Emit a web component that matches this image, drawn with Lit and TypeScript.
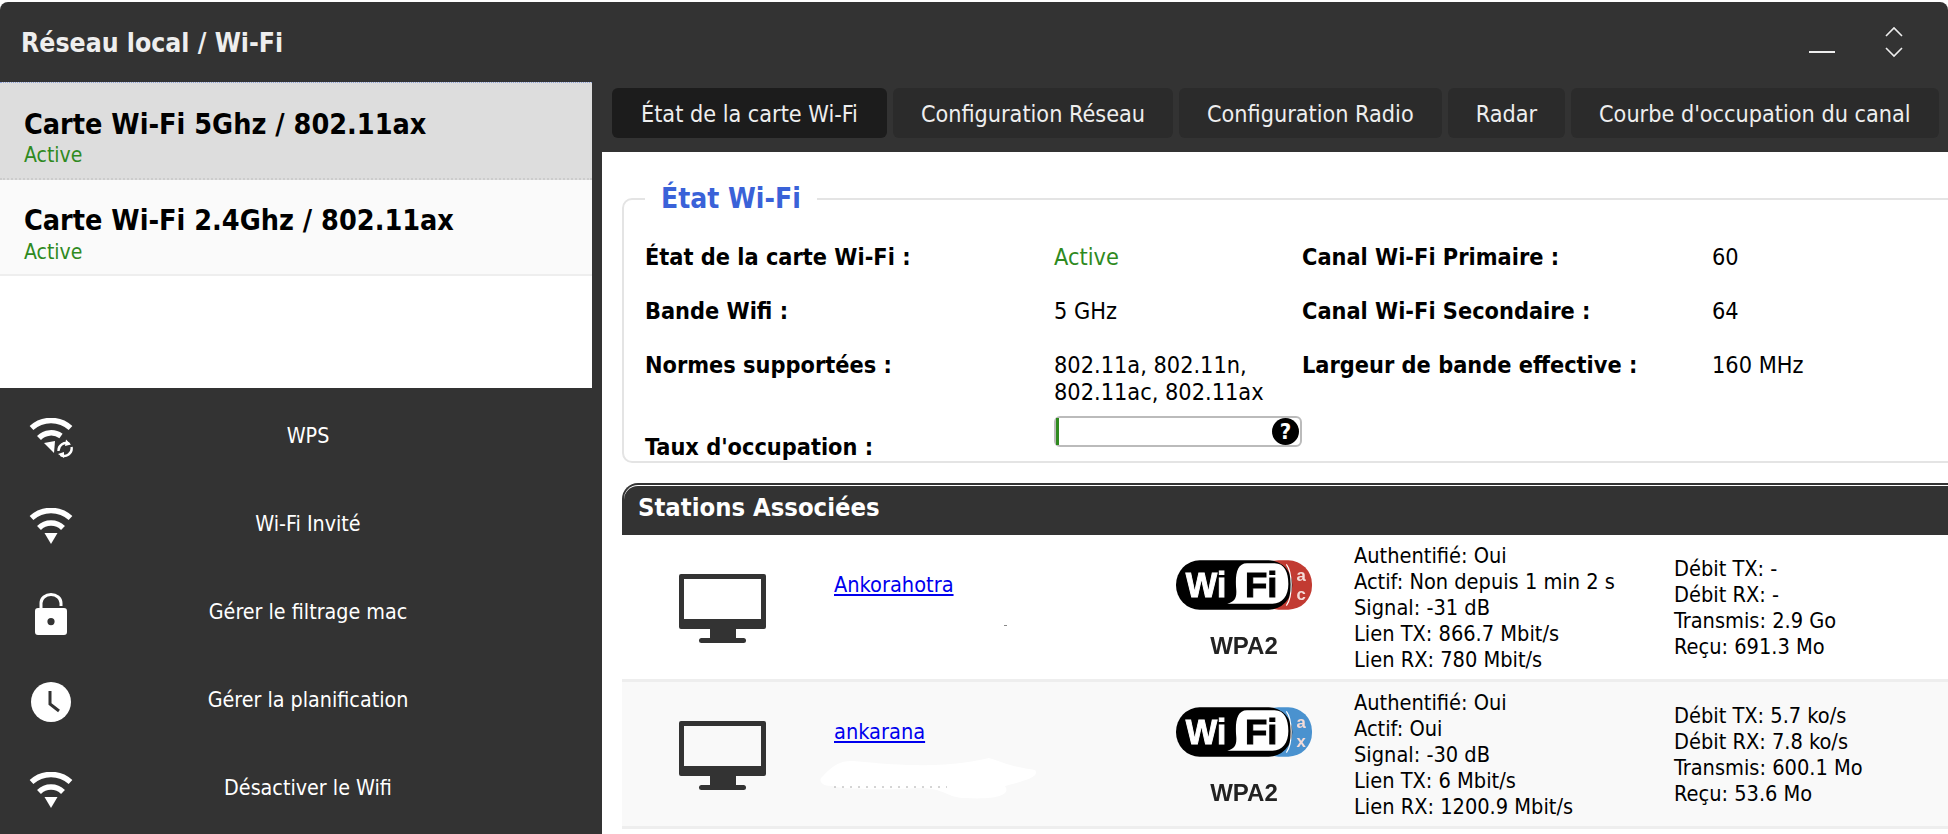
import { css, html, LitElement, svg } from 'lit';
import { customElement } from 'lit/decorators.js';

interface Station {
  name: string;
  band: 'ac' | 'ax';
  stats: string[];
  rates: string[];
}

const STATIONS: Station[] = [
  {
    name: 'Ankorahotra',
    band: 'ac',
    stats: ['Authentifié: Oui', 'Actif: Non depuis 1 min 2 s', 'Signal: -31 dB', 'Lien TX: 866.7 Mbit/s', 'Lien RX: 780 Mbit/s'],
    rates: ['Débit TX: -', 'Débit RX: -', 'Transmis: 2.9 Go', 'Reçu: 691.3 Mo'],
  },
  {
    name: 'ankarana',
    band: 'ax',
    stats: ['Authentifié: Oui', 'Actif: Oui', 'Signal: -30 dB', 'Lien TX: 6 Mbit/s', 'Lien RX: 1200.9 Mbit/s'],
    rates: ['Débit TX: 5.7 ko/s', 'Débit RX: 7.8 ko/s', 'Transmis: 600.1 Mo', 'Reçu: 53.6 Mo'],
  },
];

const TABS = ['État de la carte Wi-Fi', 'Configuration Réseau', 'Configuration Radio', 'Radar', "Courbe d'occupation du canal"];

const wifiArcs = svg`
  <path d="M2.5 10A29 29 0 0 1 41.5 10" fill="none" stroke="#fff" stroke-width="5.5" />
  <path d="M10 20A17 17 0 0 1 34 20" fill="none" stroke="#fff" stroke-width="5.5" />
`;

const ICONS = {
  wps: html`<svg width="44" height="40" viewBox="0 0 44 40">
    <path d="M2.5 10A29 29 0 0 1 41.5 10" fill="none" stroke="#fff" stroke-width="5.5" />
    <path d="M10 20A17 17 0 0 1 32 18" fill="none" stroke="#fff" stroke-width="5.5" />
    <path d="M15 25L26 23L25 35Z" fill="#fff" />
    <path d="M29.5 33a7.5 7.5 0 0 1 11-7M42.5 29a7.5 7.5 0 0 1-11 8" fill="none" stroke="#fff" stroke-width="2.4" />
    <path d="M37 21.5l5 5l-6 1.5zM35 40l-6-4l6-2z" fill="#fff" />
  </svg>`,
  wifi: html`<svg width="44" height="36" viewBox="0 0 44 36">
    ${wifiArcs}
    <path d="M15.5 25L28.5 25L22 36Z" fill="#fff" />
  </svg>`,
  lock: html`<svg width="32" height="42" viewBox="0 0 32 42">
    <path d="M6 16V10A10 8.5 0 0 1 26 10V13" fill="none" stroke="#fff" stroke-width="3" />
    <path fill-rule="evenodd" d="M3 15H29A3 3 0 0 1 32 18V39A3 3 0 0 1 29 42H3A3 3 0 0 1 0 39V18A3 3 0 0 1 3 15ZM16 25A3.6 3.6 0 1 0 16 32.2A3.6 3.6 0 1 0 16 25Z" fill="#fff" />
  </svg>`,
  clock: html`<svg width="40" height="40" viewBox="0 0 40 40">
    <circle cx="20" cy="20" r="20" fill="#fff" />
    <path d="M19 9V22L28 29" fill="none" stroke="#333" stroke-width="3" />
  </svg>`,
};

const MENU = [
  { label: 'WPS', icon: ICONS.wps },
  { label: 'Wi-Fi Invité', icon: ICONS.wifi },
  { label: 'Gérer le filtrage mac', icon: ICONS.lock },
  { label: 'Gérer la planification', icon: ICONS.clock },
  { label: 'Désactiver le Wifi', icon: ICONS.wifi },
];

const monitorIcon = html`<svg class="monitor" width="87" height="69" viewBox="0 0 87 69">
  <path fill-rule="evenodd" fill="#333" d="M2 0H85A2 2 0 0 1 87 2V53A2 2 0 0 1 85 55H2A2 2 0 0 1 0 53V2A2 2 0 0 1 2 0ZM5 5V45H82V5Z" />
  <rect x="31" y="55" width="26" height="10" fill="#333" />
  <rect x="20" y="64" width="47" height="5" rx="2.5" fill="#333" />
</svg>`;

function wifiLogo(band: 'ac' | 'ax') {
  const tint = band === 'ac' ? '#c23b32' : '#4a92cf';
  const [top, bottom] = band.split('');
  return html`<svg class="logo" width="136" height="50" viewBox="0 0 138 50">
    <rect x="80" y="0" width="58" height="50" rx="24" fill=${tint} />
    <path d="M24 0H94A24 25 0 0 1 94 50H24A24 25 0 0 1 24 0Z" fill="#000" />
    <path d="M72 3H100C110 3 114 12 114 24C114 36 108 44 98 44H52C60 42 62 38 61 28C60 14 62 3 72 3Z" fill="#fff" />
    <path d="M112 4C118 12 119 36 112 46" fill="none" stroke="#fff" stroke-width="1.2" />
    <text x="10" y="37" textLength="41" lengthAdjust="spacingAndGlyphs" class="logo-text" fill="#fff" stroke="#fff" stroke-width="1">Wi</text>
    <text x="70" y="37" textLength="33" lengthAdjust="spacingAndGlyphs" class="logo-text" fill="#000" stroke="#000" stroke-width="1">Fi</text>
    <text x="127" y="21" text-anchor="middle" class="logo-band" fill="#f4dcd8">${top}</text>
    <text x="127" y="40" text-anchor="middle" class="logo-band" fill="#f4dcd8">${bottom}</text>
  </svg>`;
}

@customElement('app-root')
export class AppRoot extends LitElement {
  static styles = css`
    :host {
      display: block;
      width: 1948px;
      height: 834px;
      overflow: hidden;
      background: #fff;
      font-family: 'DejaVu Sans', sans-serif;
      font-stretch: condensed;
      font-size: 21.6px;
      line-height: 26px;
      color: #000;
    }

    .panel {
      margin-top: 2px;
      height: 832px;
      background: #333;
      border-radius: 8px 8px 0 0;
      overflow: hidden;
    }

    .header {
      height: 80px;
      display: flex;
      align-items: center;
      padding: 0 44px 0 21px;
    }

    .title {
      flex: 1;
      padding-top: 2px;
      font-size: 26.4px;
      font-weight: bold;
      color: #eee;
    }

    .controls {
      display: flex;
      gap: 49px;
    }

    .body {
      display: flex;
      height: 752px;
    }

    /* Left column */
    .sidebar {
      width: 602px;
      flex-shrink: 0;
    }

    .cards {
      width: 592px;
      height: 306px;
      background: #fff;
    }

    .card {
      height: 96px;
      padding: 25px 0 0 24px;
      box-sizing: border-box;
      background: #fafafa;
      border-bottom: 2px solid #eee;
    }

    .card.selected {
      height: 98px;
      padding-top: 26px;
      background: #ddd;
      border-top: 1px dotted #8fa3d8;
      border-bottom: 2px dotted #ccc;
    }

    .card-name {
      font-size: 28.5px;
      font-weight: bold;
      line-height: 32px;
    }

    .card .active {
      padding-top: 2px;
      font-size: 21px;
    }

    .card.selected .active {
      padding-top: 1px;
    }

    .active {
      color: #2f8a1f;
    }

    .menu {
      padding-top: 6px;
    }

    .menu-item {
      height: 88px;
      display: grid;
      grid-template-columns: 102px 412px;
      align-items: center;
      justify-items: center;
      color: #fff;
      font-size: 21.3px;
    }

    .menu-item span {
      padding-bottom: 4px;
    }

    .menu-item svg {
      display: block;
    }

    /* Right column */
    .main {
      flex: 1;
      min-width: 0;
    }

    .tabs {
      display: flex;
      gap: 6px;
      height: 70px;
      padding: 6px 10px;
      box-sizing: border-box;
    }

    .tab {
      height: 50px;
      line-height: 51px;
      padding: 0 28px;
      background: #2b2b2b;
      border-radius: 6px;
      color: #eee;
      font-size: 23.2px;
      white-space: nowrap;
    }

    .tab.current {
      padding: 0 29px;
      background: #1c1c1c;
    }

    .content {
      height: 682px;
      background: #fff;
      padding-top: 31px;
      box-sizing: border-box;
      overflow: hidden;
    }

    fieldset {
      margin: 0 -40px 0 20px;
      padding: 28px 0 1px 21px;
      border: 2px solid #e4e4e4;
      border-radius: 10px;
    }

    legend {
      padding: 0 16px;
      font-size: 28px;
      line-height: 32px;
      font-weight: bold;
      color: #3a62d8;
    }

    .row {
      display: grid;
      grid-template-columns: 409px 248px 410px 1fr;
      padding-bottom: 27px;
      font-size: 23.3px;
      line-height: 27px;
    }

    .row.tall {
      padding-bottom: 11px;
    }

    .row.last {
      height: 44px;
      padding: 0;
    }

    .row.last b {
      align-self: end;
    }

    .meter {
      height: 31px;
      box-sizing: border-box;
      border: 2px solid #bbb;
      border-radius: 6px;
      display: flex;
      align-items: center;
      justify-content: flex-end;
      padding-right: 1px;
    }

    .meter-fill {
      width: 3px;
      height: 100%;
      margin-right: auto;
      background: #2f8a1f;
    }

    .help {
      width: 27px;
      height: 27px;
      border-radius: 50%;
      background: #000;
      color: #fff;
      font-size: 22px;
      font-weight: bold;
      line-height: 27px;
      text-align: center;
    }

    .section {
      margin: 20px 0 0 20px;
    }

    .section-head {
      border: solid #333;
      border-width: 2px 0 0 2px;
      border-radius: 16px 0 0 0;
    }

    .section-title {
      margin-top: 1px;
      height: 49px;
      padding-left: 14px;
      background: #333;
      border-radius: 14px 0 0 0;
      font-size: 25.4px;
      font-weight: bold;
      line-height: 43px;
      color: #fff;
    }

    .station {
      position: relative;
      height: 147px;
      box-sizing: border-box;
      display: grid;
      grid-template-columns: 212px 342px 178px 320px 1fr;
      border-bottom: 3px solid #eee;
    }

    .station.alt {
      background: #f9f9f9;
    }

    .monitor {
      display: block;
      margin: 39px 0 0 57px;
    }

    .name {
      padding-top: 37px;
    }

    .name a {
      color: #00e;
    }

    .logo {
      display: block;
      margin-top: 25px;
      filter: blur(0.5px);
    }

    .logo-text {
      font: bold 36px 'Liberation Sans', sans-serif;
    }

    .logo-band {
      font: bold 17px 'Liberation Sans', sans-serif;
    }

    .wpa {
      width: 136px;
      margin-top: 23px;
      text-align: center;
      font: bold 24px/26px 'Liberation Sans', sans-serif;
      color: #222;
      filter: blur(0.5px);
    }

    .stats {
      padding-top: 8px;
    }

    .rates {
      padding-top: 21px;
    }

    .blot {
      position: absolute;
      left: 197px;
      top: 74px;
    }

    .speck {
      position: absolute;
      left: 382px;
      top: 90px;
      width: 3px;
      height: 1px;
      background: #888;
    }
  `;

  private renderStation(station: Station, index: number) {
    return html`
      <div class="station ${index % 2 ? 'alt' : ''}">
        <div>${monitorIcon}</div>
        <div class="name"><a href="#">${station.name}</a></div>
        <div>
          ${wifiLogo(station.band)}
          <div class="wpa">WPA2</div>
        </div>
        <div class="stats">${station.stats.map((line) => html`<div>${line}</div>`)}</div>
        <div class="rates">${station.rates.map((line) => html`<div>${line}</div>`)}</div>
        ${index % 2
          ? html`<svg class="blot" width="220" height="44" viewBox="0 0 220 44">
              <path fill="#fff" d="M2 22C10 14 18 4 34 5C70 8 120 14 170 2C184 6 188 10 216 14C222 22 200 26 186 30C192 38 180 44 146 42C128 42 126 32 100 32C70 34 30 34 12 30C4 30 0 26 2 22Z" />
              <path d="M15 31H128" stroke="#aaa" stroke-width="1" stroke-dasharray="2 6" />
            </svg>`
          : html`<div class="speck"></div>`}
      </div>
    `;
  }

  render() {
    return html`
      <div class="panel">
        <div class="header">
          <div class="title">Réseau local / Wi-Fi</div>
          <div class="controls">
            <svg width="26" height="32" viewBox="0 0 26 32"><path d="M0 26H26" stroke="#eee" stroke-width="2" /></svg>
            <svg width="20" height="32" viewBox="0 0 20 32">
              <path d="M2 10L10 2L18 10M2 22L10 30L18 22" fill="none" stroke="#eee" stroke-width="1.6" />
            </svg>
          </div>
        </div>
        <div class="body">
          <div class="sidebar">
            <div class="cards">
              <div class="card selected">
                <div class="card-name">Carte Wi-Fi 5Ghz / 802.11ax</div>
                <div class="active">Active</div>
              </div>
              <div class="card">
                <div class="card-name">Carte Wi-Fi 2.4Ghz / 802.11ax</div>
                <div class="active">Active</div>
              </div>
            </div>
            <div class="menu">
              ${MENU.map((item) => html`<div class="menu-item">${item.icon}<span>${item.label}</span></div>`)}
            </div>
          </div>
          <div class="main">
            <div class="tabs">
              ${TABS.map((tab, i) => html`<div class="tab ${i === 0 ? 'current' : ''}">${tab}</div>`)}
            </div>
            <div class="content">
              <fieldset>
                <legend>État Wi-Fi</legend>
                <div class="row">
                  <b>État de la carte Wi-Fi :</b>
                  <span class="active">Active</span>
                  <b>Canal Wi-Fi Primaire :</b>
                  <span>60</span>
                </div>
                <div class="row">
                  <b>Bande Wifi :</b>
                  <span>5 GHz</span>
                  <b>Canal Wi-Fi Secondaire :</b>
                  <span>64</span>
                </div>
                <div class="row tall">
                  <b>Normes supportées :</b>
                  <span>802.11a, 802.11n, 802.11ac, 802.11ax</span>
                  <b>Largeur de bande effective :</b>
                  <span>160 MHz</span>
                </div>
                <div class="row last">
                  <b>Taux d'occupation :</b>
                  <div class="meter">
                    <div class="meter-fill"></div>
                    <div class="help">?</div>
                  </div>
                </div>
              </fieldset>
              <div class="section">
                <div class="section-head"><div class="section-title">Stations Associées</div></div>
                ${STATIONS.map((station, i) => this.renderStation(station, i))}
              </div>
            </div>
          </div>
        </div>
      </div>
    `;
  }
}
